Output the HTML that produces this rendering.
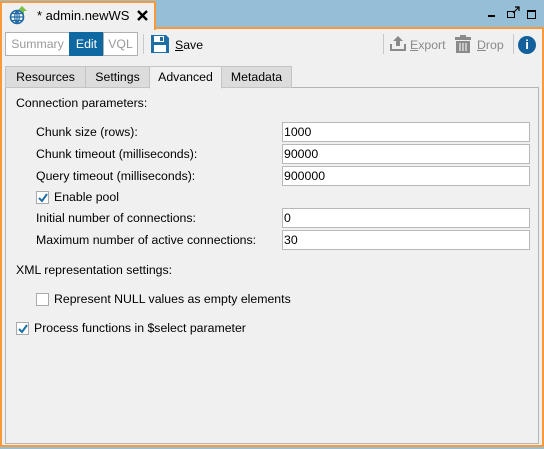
<!DOCTYPE html>
<html><head><style>
*{box-sizing:border-box;margin:0;padding:0}
body{width:544px;height:449px;background:#94bfd6;font-family:"Liberation Sans",sans-serif;font-size:12.3px;color:#000;position:relative;overflow:hidden}
.a{position:absolute}
.frame{left:0;top:28px;width:544px;height:419px;border:2px solid #f89a3a;border-top:none;background:#f0f0f0}
.ftop{left:155px;top:27px;width:389px;height:2px;background:#f89a3a}
.tab{left:0;top:1px;width:156px;height:29px;background:#f0f0f0;border:2px solid #f89a3a;border-bottom:none}
.seg{top:32px;height:24px;border:1px solid #b0b0b0;background:#fff;line-height:22px;text-align:center;color:#9a9a9a}
.t{top:66px;height:22px;border:1px solid #c4c4c4;background:#dcdcdc;line-height:21px;text-align:center}
.panel{left:5px;top:87px;width:534px;height:357px;border:1px solid #b5b5b5;background:#f0f0f0}
.lbl{line-height:16px}
.inp{left:282px;width:248px;height:20px;border:1px solid #b8b8b8;background:#fff;line-height:18px;padding-left:1px}
.cb{width:13px;height:13px;border:1px solid #aaa;background:#fff}
</style></head><body>
<div class="a frame"></div>
<div class="a ftop"></div>
<div class="a tab"></div>
<svg class="a" style="left:8px;top:5px" width="22" height="20" viewBox="0 0 22 20">
<path d="M14 1l5 5h-3v9h-4V6H9z" fill="#7bc043"/>
<circle cx="9" cy="12" r="6.5" fill="#fff" stroke="#1f6aa6" stroke-width="1.6"/>
<path d="M2.5 12h13M9 5.5v13M4 8.5h10M4 15.5h10M9 5.5c-3 3-3 10 0 13M9 5.5c3 3 3 10 0 13" stroke="#1f6aa6" stroke-width="1.2" fill="none"/>
</svg>
<div class="a" style="left:37px;top:8px;font-size:13px">* admin.newWS</div>
<svg class="a" style="left:137px;top:10px" width="11" height="11"><path d="M1 1L10 10M10 1L1 10" stroke="#000" stroke-width="2.4"/></svg>
<div class="a" style="left:488px;top:15px;width:7px;height:2px;background:#000"></div>
<div class="a" style="left:507px;top:11px;width:8px;height:7px;border:1.5px solid #000"></div>
<svg class="a" style="left:512px;top:6px" width="8" height="8"><path d="M1 7L7 1M3 1h4v4" stroke="#000" fill="none" stroke-width="1.2"/></svg>
<div class="a" style="left:527px;top:10px;width:9px;height:9px;border:1.5px solid #000;border-top-width:2.5px"></div>

<div class="a seg" style="left:5px;width:65px">Summary</div>
<div class="a seg" style="left:69px;width:35px;background:#0e69a3;border-color:#0e69a3;color:#fff">Edit</div>
<div class="a seg" style="left:103px;width:35px">VQL</div>
<div class="a" style="left:143px;top:34px;width:1px;height:20px;background:#c8c8c8"></div>
<svg class="a" style="left:150px;top:34px" width="20" height="20" viewBox="0 0 20 20">
<path d="M1 1h15l3 3v15H1z" fill="#1d6fa5"/><rect x="4" y="2" width="10" height="6" fill="#fff"/><rect x="10" y="3" width="3" height="4" fill="#1d6fa5"/><rect x="4" y="11" width="12" height="7" fill="#fff"/>
</svg>
<div class="a" style="left:175px;top:38px"><u>S</u>ave</div>
<div class="a" style="left:383px;top:34px;width:1px;height:20px;background:#c8c8c8"></div>
<svg class="a" style="left:389px;top:36px" width="18" height="16" viewBox="0 0 18 16"><path d="M9 0l5 5h-3v5H7V5H4z" fill="#8a8a8a"/><path d="M1 8v7h16V8h-2v5H3V8z" fill="#8a8a8a"/></svg>
<div class="a" style="left:410px;top:38px;color:#8a8a8a"><u>E</u>xport</div>
<svg class="a" style="left:455px;top:35px" width="16" height="18" viewBox="0 0 16 18"><rect x="5" y="0" width="6" height="2" fill="#8a8a8a"/><rect x="0" y="2" width="16" height="3" fill="#8a8a8a"/><path d="M1 6h14v12H1z" fill="#8a8a8a"/><path d="M5 8v8M8 8v8M11 8v8" stroke="#f0f0f0" stroke-width="1.2"/></svg>
<div class="a" style="left:477px;top:38px;color:#8a8a8a"><u>D</u>rop</div>
<div class="a" style="left:513px;top:34px;width:1px;height:20px;background:#c8c8c8"></div>
<div class="a" style="left:518px;top:36px;width:18px;height:18px;border-radius:50%;background:#12609c;color:#fff;font-weight:bold;text-align:center;line-height:18px;font-size:13px">i</div>

<div class="a panel"></div>
<div class="a t" style="left:5px;width:81px">Resources</div>
<div class="a t" style="left:85px;width:65px">Settings</div>
<div class="a t" style="left:149px;width:73px;background:#f0f0f0;border-bottom-color:#f0f0f0;height:23px">Advanced</div>
<div class="a t" style="left:221px;width:71px">Metadata</div>

<div class="a lbl" style="left:16px;top:95px">Connection parameters:</div>
<div class="a lbl" style="left:36px;top:124px">Chunk size (rows):</div>
<div class="a lbl" style="left:36px;top:146px">Chunk timeout (milliseconds):</div>
<div class="a lbl" style="left:36px;top:168px">Query timeout (milliseconds):</div>
<div class="a cb" style="left:36px;top:191px"></div>
<svg class="a" style="left:37px;top:192px" width="12" height="12"><path d="M2 6l3 3 5-7" stroke="#1d6fa5" stroke-width="2" fill="none"/></svg>
<div class="a lbl" style="left:54px;top:189px">Enable pool</div>
<div class="a lbl" style="left:36px;top:210px">Initial number of connections:</div>
<div class="a lbl" style="left:36px;top:232px">Maximum number of active connections:</div>
<div class="a inp" style="top:122px">1000</div>
<div class="a inp" style="top:144px">90000</div>
<div class="a inp" style="top:166px">900000</div>
<div class="a inp" style="top:208px">0</div>
<div class="a inp" style="top:230px">30</div>
<div class="a lbl" style="left:16px;top:262px">XML representation settings:</div>
<div class="a cb" style="left:36px;top:293px"></div>
<div class="a lbl" style="left:54px;top:291px">Represent NULL values as empty elements</div>
<div class="a cb" style="left:16px;top:322px"></div>
<svg class="a" style="left:17px;top:323px" width="12" height="12"><path d="M2 6l3 3 5-7" stroke="#1d6fa5" stroke-width="2" fill="none"/></svg>
<div class="a lbl" style="left:34px;top:320px">Process functions in $select parameter</div>
</body></html>
